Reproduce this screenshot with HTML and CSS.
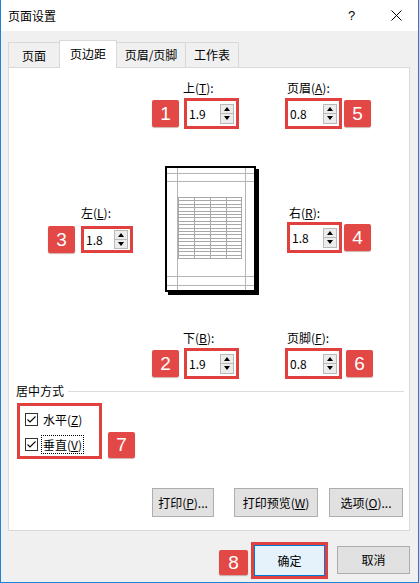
FILE: index.html
```html
<!DOCTYPE html>
<html lang="zh-CN">
<head>
<meta charset="utf-8">
<title>页面设置</title>
<link rel="stylesheet" href="styles.css">
</head>
<body>
<div class="window">
  <div class="titlebar">
    <span class="title">页面设置</span>
    <span class="help">?</span>
    <span class="close"><svg width="11" height="11" viewBox="0 0 11 11"><path d="M0.5 0.5L10.5 10.5M10.5 0.5L0.5 10.5" stroke="#000" stroke-width="1" fill="none"/></svg></span>
  </div>
  <div class="body">
    <div class="tabs">
      <div class="tab t1">页面</div>
      <div class="tab t2 active">页边距</div>
      <div class="tab t3">页眉/页脚</div>
      <div class="tab t4">工作表</div>
    </div>
    <div class="panel">
      <div class="row row-top">
        <div class="field f-left">
          <div class="label">上(<u>T</u>):</div>
          <div class="ctl">
            <span class="badge">1</span>
            <div class="frame"><span class="val">1.9</span><span class="spin"><span class="sb up"></span><span class="sb down"></span></span></div>
          </div>
        </div>
        <div class="field f-right f-header">
          <div class="label">页眉(<u>A</u>):</div>
          <div class="ctl">
            <div class="frame wide"><span class="val">0.8</span><span class="spin"><span class="sb up"></span><span class="sb down"></span></span></div>
            <span class="badge">5</span>
          </div>
        </div>
      </div>

      <div class="row row-mid">
        <div class="field f-left f-lm">
          <div class="label">左(<u>L</u>):</div>
          <div class="ctl">
            <span class="badge">3</span>
            <div class="frame small"><span class="val">1.8</span><span class="spin"><span class="sb up"></span><span class="sb down"></span></span></div>
          </div>
        </div>
        <svg class="preview" width="94" height="129" viewBox="0 0 94 129" shape-rendering="crispEdges">
          <rect x="3" y="3" width="91" height="126" fill="#000"/>
          <rect x="1" y="1" width="89" height="124" fill="#fff" stroke="#000" stroke-width="2"/>
          <path d="M12.5 2V124M80.5 2V124M2 7.5H89M2 15.5H89M2 110.5H89M2 119.5H89" stroke="#b4b4b4" stroke-width="1" fill="none"/>
          <path d="M13.5 31.5H76.5V92.5H13.5Z M29.5 31.5V92.5M45.5 31.5V92.5M61.5 31.5V92.5 M13.5 34.5H76.5M13.5 38.5H76.5M13.5 41.5H76.5M13.5 45.5H76.5M13.5 48.5H76.5M13.5 51.5H76.5M13.5 55.5H76.5M13.5 58.5H76.5M13.5 62.5H76.5M13.5 65.5H76.5M13.5 68.5H76.5M13.5 72.5H76.5M13.5 75.5H76.5M13.5 79.5H76.5M13.5 82.5H76.5M13.5 85.5H76.5M13.5 89.5H76.5" stroke="#a8a8a8" stroke-width="1" fill="none"/>
        </svg>
        <div class="field f-right f-rm">
          <div class="label">右(<u>R</u>):</div>
          <div class="ctl">
            <div class="frame"><span class="val">1.8</span><span class="spin"><span class="sb up"></span><span class="sb down"></span></span></div>
            <span class="badge">4</span>
          </div>
        </div>
      </div>

      <div class="row row-bot">
        <div class="field f-left">
          <div class="label">下(<u>B</u>):</div>
          <div class="ctl">
            <span class="badge">2</span>
            <div class="frame"><span class="val">1.9</span><span class="spin"><span class="sb up"></span><span class="sb down"></span></span></div>
          </div>
        </div>
        <div class="field f-right f-header">
          <div class="label">页脚(<u>F</u>):</div>
          <div class="ctl">
            <div class="frame wide"><span class="val">0.8</span><span class="spin"><span class="sb up"></span><span class="sb down"></span></span></div>
            <span class="badge b6">6</span>
          </div>
        </div>
      </div>

      <div class="group">
        <span class="group-label">居中方式</span>
        <span class="group-line"></span>
      </div>

      <div class="check-row">
        <div class="check-frame">
          <div class="check-item">
            <span class="cb"><svg width="11" height="11" viewBox="0 0 11 11"><path d="M1.5 5.5L4 8L9.5 2.5" stroke="#000" stroke-width="1.1" fill="none"/></svg></span>
            <span class="cl">水平(<u>Z</u>)</span>
          </div>
          <div class="check-item">
            <span class="cb"><svg width="11" height="11" viewBox="0 0 11 11"><path d="M1.5 5.5L4 8L9.5 2.5" stroke="#000" stroke-width="1.1" fill="none"/></svg></span>
            <span class="cl focus">垂直(<u>V</u>)</span>
          </div>
        </div>
        <span class="badge b7">7</span>
      </div>

      <div class="btn-row">
        <button class="btn b-print">打印(<u>P</u>)...</button>
        <button class="btn b-preview">打印预览(<u>W</u>)</button>
        <button class="btn b-opt">选项(<u>O</u>)...</button>
      </div>
    </div>

    <div class="footer">
      <span class="badge b8">8</span>
      <div class="ok-frame"><button class="btn ok">确定</button></div>
      <button class="btn cancel">取消</button>
    </div>
  </div>
</div>
</body>
</html>
```

FILE: styles.css
```css
* { box-sizing: border-box; }
html, body { margin: 0; padding: 0; background: #f0f0f0; }
body { width: 419px; height: 583px; overflow: hidden; }

.window {
  width: 419px;
  height: 583px;
  border: 1px solid #1883d7;
  border-top: 0;
  background: #f0f0f0;
  font-family: "Noto Sans CJK SC", "Microsoft YaHei", sans-serif;
  font-size: 12px;
  color: #000;
}

.titlebar {
  height: 31px;
  background: #fff;
  display: flex;
  align-items: center;
  padding: 0 16px 0 7px;
}
.title { flex: 1; line-height: 16px; }
.help { font-family: "Liberation Sans", Arial, sans-serif; font-size: 13px; line-height: 14px; width: 7px; margin-right: 36px; }
.close { display: flex; width: 11px; height: 11px; }

.body { padding: 9px 8px 0 7px; }

.tabs { display: flex; align-items: flex-end; height: 27px; }
.tab {
  height: 25px;
  border: 1px solid #d9d9d9;
  border-bottom: 0;
  background: #f0f0f0;
  display: flex;
  align-items: center;
  justify-content: center;
  line-height: 16px;
  margin-left: -1px;
}
.t1 { width: 52px; margin-left: 0; padding-top: 1px; }
.t2 { width: 58px; }
.t3 { width: 70px; }
.t4 { width: 54px; }
.tab.active {
  height: 28px;
  margin-bottom: -1px;
  background: #fff;
  position: relative;
  z-index: 1;
  padding-bottom: 2px;
}

.panel {
  height: 464px;
  border: 1px solid #d9d9d9;
  background: #fff;
  display: flex;
  flex-direction: column;
}

.row { display: flex; align-items: flex-start; }
.row-top { margin-top: 12px; padding-left: 143px; }
.row-mid { margin-top: 37px; padding-left: 39px; }
.row-bot { margin-top: 35px; padding-left: 143px; }

.field { display: flex; flex-direction: column; }
.label { line-height: 15px; height: 15px; margin-bottom: 3px; }
.f-left .label { margin-left: 31px; }
.f-right .label { margin-left: 2px; }
.f-header { margin-left: 46px; }
.f-lm { margin-top: 39px; }
.f-lm .label { margin-left: 33px; margin-bottom: 6px; }
.f-rm { margin-top: 39px; margin-left: 28px; }
.f-rm .label { margin-bottom: 2px; }

.ctl { display: flex; align-items: center; }
.f-left .ctl { gap: 5px; }
.f-right .ctl { gap: 2px; }
.f-lm .ctl { gap: 6px; }

.badge {
  width: 27px;
  height: 27px;
  background: #e24845;
  border-radius: 2px;
  color: #fff;
  font-family: "Liberation Sans", Arial, sans-serif;
  font-size: 19px;
  line-height: 27px;
  text-align: center;
  box-shadow: 0 1px 1px rgba(120, 30, 30, 0.35);
}
.b6 { margin-left: 2px; }

.frame {
  width: 55px;
  height: 31px;
  border: 3px solid #e0413e;
  background: #fff;
  display: flex;
  align-items: center;
  padding: 0 2px 0 2px;
}
.frame.wide { width: 57px; }
.frame.small { width: 52px; height: 27px; }
.val { flex: 1; line-height: 16px; font-size: 12px; padding-top: 1px; }

.spin { display: flex; flex-direction: column; width: 14px; height: 20px; }
.frame.small .spin { height: 19px; }
.sb {
  flex: 1;
  border: 1px solid #b9b9b9;
  background: #ececec;
  display: flex;
  align-items: center;
  justify-content: center;
}
.sb.down { border-top: 0; }
.sb.up::before {
  content: "";
  border-left: 3px solid transparent;
  border-right: 3px solid transparent;
  border-bottom: 4px solid #000;
}
.sb.down::before {
  content: "";
  border-left: 3px solid transparent;
  border-right: 3px solid transparent;
  border-top: 4px solid #000;
}

.preview { display: block; margin-left: 32px; }

.group { display: flex; align-items: center; margin-top: 4px; padding-left: 7px; padding-right: 5px; }
.group-label { line-height: 15px; }
.group-line { flex: 1; height: 1px; background: #dcdcdc; margin-left: 4px; margin-top: 2px; }

.check-row { display: flex; align-items: flex-end; margin-top: 5px; padding-left: 8px; }
.check-frame {
  width: 85px;
  height: 56px;
  border: 3px solid #e0413e;
  padding: 3px 0 0 5px;
  display: flex;
  flex-direction: column;
  gap: 5px;
}
.check-item { display: flex; align-items: center; height: 20px; }
.cb {
  width: 13px;
  height: 13px;
  border: 1px solid #333;
  background: #fff;
  display: flex;
  align-items: center;
  justify-content: center;
  margin-right: 3px;
}
.cl { line-height: 17px; padding: 0 1px; border: 1px solid transparent; }
.cl.focus { border: 1px dotted #000; }
.b7 { margin-left: 6px; margin-bottom: 1px; height: 26px; line-height: 26px; }

.btn {
  font-family: inherit;
  font-size: 12px;
  color: #000;
  background: #e1e1e1;
  border: 1px solid #adadad;
  padding: 0;
  margin: 0;
  line-height: 16px;
}
.btn-row { display: flex; justify-content: flex-end; margin-top: 29px; padding-right: 6px; }
.btn-row .btn { height: 29px; }
.b-print { width: 62px; margin-right: 20px; }
.b-preview { width: 84px; margin-right: 11px; }
.b-opt { width: 74px; }

.footer { display: flex; justify-content: flex-end; align-items: center; margin-top: 11px; }
.b8 { width: 29px; height: 25px; line-height: 25px; margin-right: 3px; margin-top: 3px; }
.ok-frame { width: 77px; height: 37px; border: 3px solid #e0413e; }
.ok { width: 100%; height: 100%; background: #e5f1fb; border: 1px solid #0078d7; }
.cancel { width: 73px; height: 28px; margin-left: 9px; margin-top: -2px; }
```
